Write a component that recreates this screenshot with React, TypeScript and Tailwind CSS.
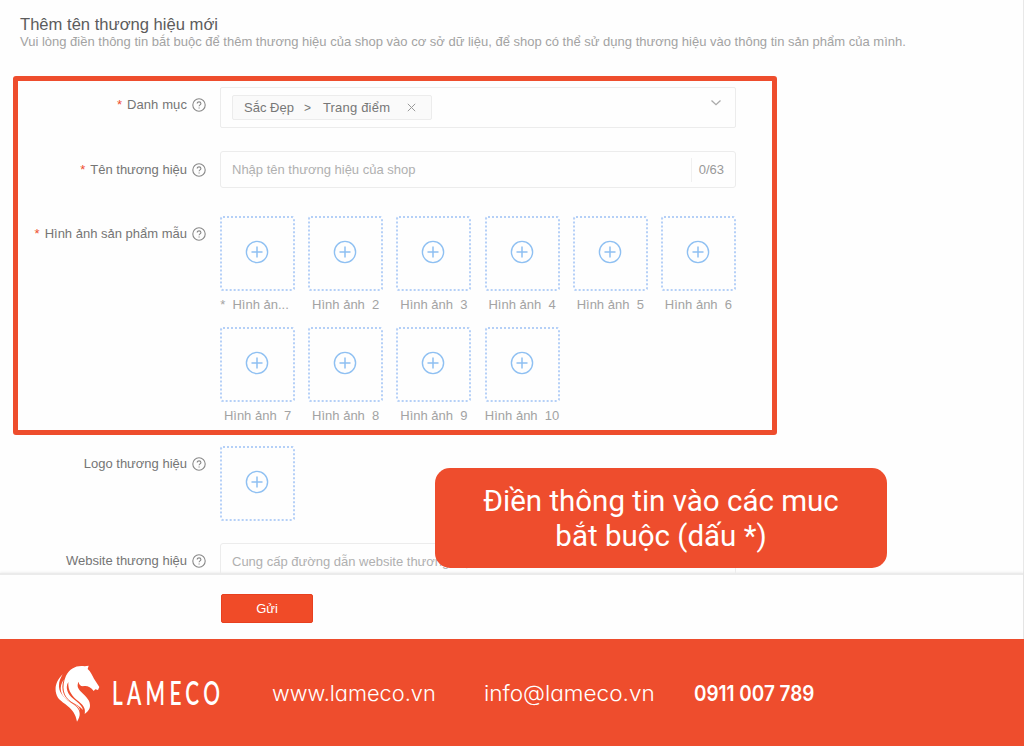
import type { ReactNode } from "react";

function HelpIcon() {
  return (
    <svg className="ml-[5px] h-[14px] w-[14px] shrink-0" viewBox="0 0 14 14" fill="none" stroke="#888" strokeWidth="1.1">
      <circle cx="7" cy="7" r="6.2" />
      <path d="M5.2 5.6c0-2.4 3.7-2.3 3.7-.1 0 1.4-1.8 1.4-1.8 2.8M7.1 9.5v1.1" />
    </svg>
  );
}

function Label({ text, required, spacing }: { text: string; required?: boolean; spacing: string }) {
  return (
    <div className="flex h-[18px] w-[188px] shrink-0 items-center justify-end whitespace-nowrap text-[13px] text-[#757575]">
      {required && <span className="mr-[5px] text-[#ee4d2d]">*</span>}
      <span className={spacing}>{text}</span>
      <HelpIcon />
    </div>
  );
}

function UploadBox() {
  return (
    <div className="flex h-[75px] w-[75px] items-center justify-center rounded-[3px] border-2 border-dotted border-[#b5d0f7] pb-[3px] pr-px">
      <svg className="h-6 w-6" viewBox="0 0 24 24" fill="none" stroke="#8fc0f2">
        <circle cx="12" cy="12" r="10.6" strokeWidth="1.4" />
        <path d="M12 6.5v11M6.5 12h11" strokeWidth="1.5" />
      </svg>
    </div>
  );
}

function Row({ children, className }: { children: ReactNode; className: string }) {
  return <div className={`flex gap-[14px] ${className}`}>{children}</div>;
}

const captions = ["*  Hình ản...", "Hình ảnh  2", "Hình ảnh  3", "Hình ảnh  4", "Hình ảnh  5", "Hình ảnh  6", "Hình ảnh  7", "Hình ảnh  8", "Hình ảnh  9", "Hình ảnh  10"];

function Horse() {
  return (
    <svg className="h-[60px] w-[46px] shrink-0" viewBox="40 40 138 180" fill="#fff">
      <path d="M76 78C88 56 108 46 132 50L144 48L141 58C150 66 154 76 160 87L176 112L172 121L164 119L159 124C151 113 141 108 131 109C121 111 114 105 114 96C108 107 111 116 121 126C138 142 149 153 148 169C147 181 139 187 132 193C135 178 130 169 116 157C95 141 81 124 83 97C76 108 77 121 86 135C98 152 124 161 127 181C118 169 105 165 93 157C67 140 62 111 76 78Z" />
      <path d="M66 74C45 94 38 121 52 144C66 163 103 173 109 216C125 191 115 176 98 164C76 150 56 133 55 112C54 97 59 87 66 74Z" />
      <path d="M69 90C54 111 59 136 79 151C93 161 110 164 118 183C118 170 106 166 94 160C69 144 59 119 69 90Z" />
    </svg>
  );
}

export default function App() {
  return (
    <div className="flex h-[746px] w-[1024px] flex-col overflow-hidden bg-[#fefefe] font-['Liberation_Sans',sans-serif]">
      <main className="relative h-[639px] border-r border-[#e8e8e8]">
        <div className="h-[573px] overflow-hidden">
          <header className="h-[76px] whitespace-nowrap pl-5 pt-[15px]">
            <h1 className="h-[18px] text-[16.6px] leading-[20px] text-[#5c5c5c]">Thêm tên thương hiệu mới</h1>
            <p className="text-[13px] leading-[18px] text-[#a3a3a3]">
              Vui lòng điền thông tin bắt buộc để thêm thương hiệu của shop vào cơ sở dữ liệu, để shop có thể sử dụng thương hiệu vào thông tin sản phẩm của mình.
            </p>
          </header>

          <section className="ml-[13px] h-[359px] w-[764px] rounded-[3px] border-[5px] border-[#ee4d2d] pt-[6px]">
            <Row className="h-[64px]">
              <div className="pt-[9px]"><Label text="Danh mục" required spacing="tracking-[0.1px]" /></div>
              <div className="flex h-[41px] w-[516px] items-start justify-between rounded-[2px] border border-[#ececec] py-[7px] pl-[11px] pr-[13px]">
                <div className="flex h-[25px] w-[200px] items-center whitespace-nowrap rounded-[2px] border border-[#ececec] bg-[#fafafa] pl-[11px] text-[13px] text-[#777]">
                  <span>Sắc Đẹp</span>
                  <span className="ml-[10px] text-[12px]">&gt;</span>
                  <span className="ml-[12px] tracking-[0.2px]">Trang điểm</span>
                  <svg className="ml-[17px] h-[9px] w-[9px]" viewBox="0 0 9 9" stroke="#999" fill="none"><path d="M.8.8l7.4 7.4M8.2.8L.8 8.2" /></svg>
                </div>
                <svg className="mt-[4px] h-[8px] w-[12px]" viewBox="0 0 12 8" stroke="#aaa" strokeWidth="1.3" fill="none"><path d="M1.5 1.5L6 5.7l4.5-4.2" /></svg>
              </div>
            </Row>
            <Row className="h-[65px]">
              <div className="pt-[10px]"><Label text="Tên thương hiệu" required spacing="tracking-normal" /></div>
              <div className="flex h-[37px] w-[516px] items-center justify-between rounded-[3px] border border-[#ececec] pl-[11px] pr-[11px] text-[13px] text-[#b0b0b0]">
                <span>Nhập tên thương hiệu của shop</span>
                <span className="flex h-6 items-center border-l border-[#f0f0f0] pl-[7px] text-[#999]">0/63</span>
              </div>
            </Row>
            <Row className="h-[212px]">
              <div className="pt-[9px]"><Label text="Hình ảnh sản phẩm mẫu" required spacing="tracking-normal" /></div>
              <div className="grid w-[516px] grid-cols-[repeat(6,75px)] content-start justify-between">
                {captions.map((c, i) => (
                  <div key={c} className="h-[111px] w-[75px]">
                    <UploadBox />
                    <div className={`mt-[5px] whitespace-pre text-center text-[13px] leading-[18px] text-[#a3a3a3] ${i === 0 ? "pr-[6px]" : ""}`}>{c}</div>
                  </div>
                ))}
              </div>
            </Row>
          </section>

          <div className="ml-[18px] pt-[11px]">
            <Row className="h-[97px]">
              <div className="pt-[9px]"><Label text="Logo thương hiệu" spacing="tracking-normal" /></div>
              <UploadBox />
            </Row>
            <Row className="h-[40px]">
              <div className="pt-[9px]"><Label text="Website thương hiệu" spacing="tracking-normal" /></div>
              <div className="flex h-[37px] w-[516px] items-center whitespace-nowrap rounded-[3px] border border-[#ececec] pl-[11px] text-[13px] text-[#b0b0b0]">
                Cung cấp đường dẫn website thương hiệu
              </div>
            </Row>
          </div>
        </div>

        <div className="h-[66px] border-t-[2px] border-[#ebebeb] pl-[221px] pt-[19px] shadow-[0_-1px_2px_rgba(0,0,0,0.06)]">
          <button className="flex h-[29px] w-[92px] items-center justify-center rounded-[2px] border border-[#e8401f] bg-[#f04b28] text-[13px] text-white">Gửi</button>
        </div>

        <div className="absolute left-[435px] top-[468px] flex h-[100px] w-[452px] items-center justify-center rounded-[15px] bg-[#ee4d2d] pt-[2px] text-center font-['Roboto',sans-serif] text-[29.5px] leading-[35px] text-white">
          <p className="whitespace-nowrap">Điền thông tin vào các muc<br />bắt buộc (dấu *)</p>
        </div>
      </main>

      <footer className="flex h-[107px] items-center whitespace-nowrap bg-[#ee4d2d] pl-[54px] pt-px text-white [font-feature-settings:'cv11']">
        <Horse />
        <div className="ml-[12px] w-[148px] shrink-0">
          <div className="origin-left scale-x-[0.65] font-['Lato',sans-serif] text-[32px] font-semibold tracking-[6.6px]">LAMECO</div>
        </div>
        <div className="ml-[12px] w-[212px] shrink-0 pt-px font-['Inter',sans-serif] text-[22px] font-light">
          <div className="origin-left scale-x-[0.99]">www.lameco.vn</div>
        </div>
        <div className="w-[210px] shrink-0 pt-px font-['Inter',sans-serif] text-[22px] font-light">
          <div className="origin-left scale-x-[1.025]">info@lameco.vn</div>
        </div>
        <div className="pt-px font-['Inter',sans-serif] text-[21.5px] font-semibold">
          <div className="origin-left scale-x-[0.88]">0911 007 789</div>
        </div>
      </footer>
    </div>
  );
}
